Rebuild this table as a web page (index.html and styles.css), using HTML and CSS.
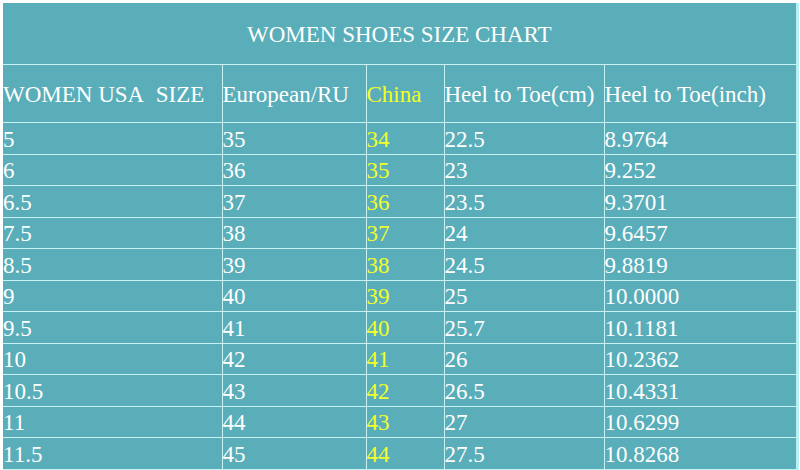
FILE: index.html
```html
<!DOCTYPE html>
<html>
<head>
<meta charset="utf-8">
<link rel="stylesheet" href="styles.css">
</head>
<body>
<table class="chart">
  <colgroup>
    <col class="c1"><col class="c2"><col class="c3"><col class="c4"><col class="c5">
  </colgroup>
  <tr class="title-row"><td colspan="5" class="title">WOMEN SHOES SIZE CHART</td></tr>
  <tr class="head-row">
    <td>WOMEN USA&nbsp; SIZE</td>
    <td>European/RU</td>
    <td class="cn">China</td>
    <td>Heel to Toe(cm)</td>
    <td>Heel to Toe(inch)</td>
  </tr>
  <tr><td>5</td><td>35</td><td class="cn">34</td><td>22.5</td><td>8.9764</td></tr>
  <tr><td>6</td><td>36</td><td class="cn">35</td><td>23</td><td>9.252</td></tr>
  <tr><td>6.5</td><td>37</td><td class="cn">36</td><td>23.5</td><td>9.3701</td></tr>
  <tr><td>7.5</td><td>38</td><td class="cn">37</td><td>24</td><td>9.6457</td></tr>
  <tr><td>8.5</td><td>39</td><td class="cn">38</td><td>24.5</td><td>9.8819</td></tr>
  <tr><td>9</td><td>40</td><td class="cn">39</td><td>25</td><td>10.0000</td></tr>
  <tr><td>9.5</td><td>41</td><td class="cn">40</td><td>25.7</td><td>10.1181</td></tr>
  <tr><td>10</td><td>42</td><td class="cn">41</td><td>26</td><td>10.2362</td></tr>
  <tr><td>10.5</td><td>43</td><td class="cn">42</td><td>26.5</td><td>10.4331</td></tr>
  <tr><td>11</td><td>44</td><td class="cn">43</td><td>27</td><td>10.6299</td></tr>
  <tr><td>11.5</td><td>45</td><td class="cn">44</td><td>27.5</td><td>10.8268</td></tr>
</table>
</body>
</html>
```
FILE: styles.css
```css
html, body {
  margin: 0;
  padding: 0;
  background: #ffffff;
}
body {
  padding: 3px 0 0 3px;
  overflow: hidden;
}
.chart {
  border-collapse: collapse;
  table-layout: fixed;
  width: 794px;
  background: #59aeb9;
  font-family: "Liberation Serif", "Times New Roman", serif;
  font-size: 23px;
  color: #ffffff;
  border-right: 3px solid #b6f0f2;
}
.c1 { width: 219px; }
.c2 { width: 144px; }
.c3 { width: 78px; }
.c4 { width: 160px; }
.c5 { width: 193px; }
.chart td {
  border: 1px solid #c6f2f2;
  padding: 2px 0 0 0;
  height: 28.5px;
  vertical-align: middle;
  white-space: nowrap;
  line-height: 1;
  overflow: hidden;
}
.chart tr:first-child td { border-top: none; }
.chart td:first-child { border-left: none; }
.chart .title-row td {
  height: 60px;
  text-align: center;
  padding-top: 1px;
}
.chart .head-row td {
  height: 56px;
  padding-top: 1px;
}
.chart td.cn { color: #f2ff2a; }
```
